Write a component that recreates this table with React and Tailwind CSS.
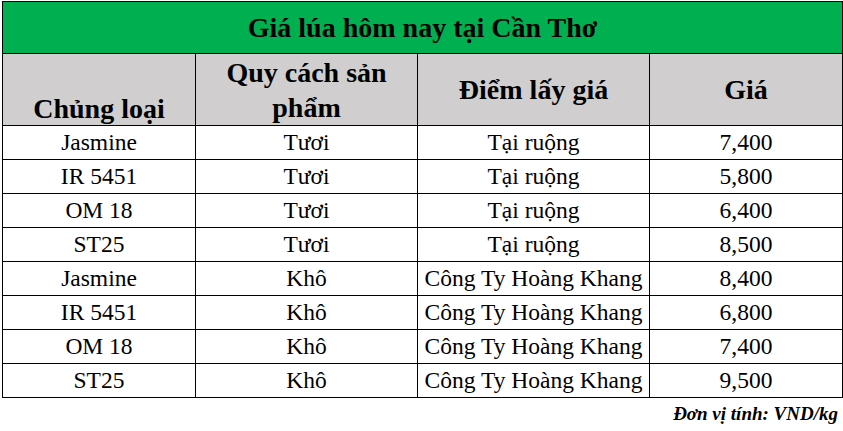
const rows = [
  ['Jasmine', 'Tươi', 'Tại ruộng', '7,400'],
  ['IR 5451', 'Tươi', 'Tại ruộng', '5,800'],
  ['OM 18', 'Tươi', 'Tại ruộng', '6,400'],
  ['ST25', 'Tươi', 'Tại ruộng', '8,500'],
  ['Jasmine', 'Khô', 'Công Ty Hoàng Khang', '8,400'],
  ['IR 5451', 'Khô', 'Công Ty Hoàng Khang', '6,800'],
  ['OM 18', 'Khô', 'Công Ty Hoàng Khang', '7,400'],
  ['ST25', 'Khô', 'Công Ty Hoàng Khang', '9,500'],
];

export default function App() {
  return (
    <div className="w-[843px] h-[431px] bg-white pt-px pl-[2px] font-['Liberation_Serif','Times_New_Roman',serif] text-black">
      <table className="w-[840px] table-fixed border-collapse">
        <colgroup>
          <col className="w-[193px]" />
          <col className="w-[222px]" />
          <col className="w-[232px]" />
          <col className="w-[193px]" />
        </colgroup>
        <thead>
          <tr className="h-[52px] bg-[#00b050]">
            <th colSpan={4} className="border border-black text-[28px] font-bold leading-none">
              Giá lúa hôm nay tại Cần Thơ
            </th>
          </tr>
          <tr className="h-[72px] bg-[#d0cece] text-[28px] font-bold">
            <th className="border border-black align-bottom pb-[2px] leading-none">Chủng loại</th>
            <th className="border border-black leading-[35px] px-2">Quy cách sản phẩm</th>
            <th className="border border-black leading-none">Điểm lấy giá</th>
            <th className="border border-black leading-none">Giá</th>
          </tr>
        </thead>
        <tbody>
          {rows.map((r, i) => (
            <tr key={i} className="h-[34px] text-[23.5px] leading-none">
              {r.map((c, j) => (
                <td key={j} className="border border-black text-center">{c}</td>
              ))}
            </tr>
          ))}
        </tbody>
      </table>
      <div className="w-[836px] text-right text-[19px] font-bold italic leading-none mt-[6px]">
        Đơn vị tính: VND/kg
      </div>
    </div>
  );
}
